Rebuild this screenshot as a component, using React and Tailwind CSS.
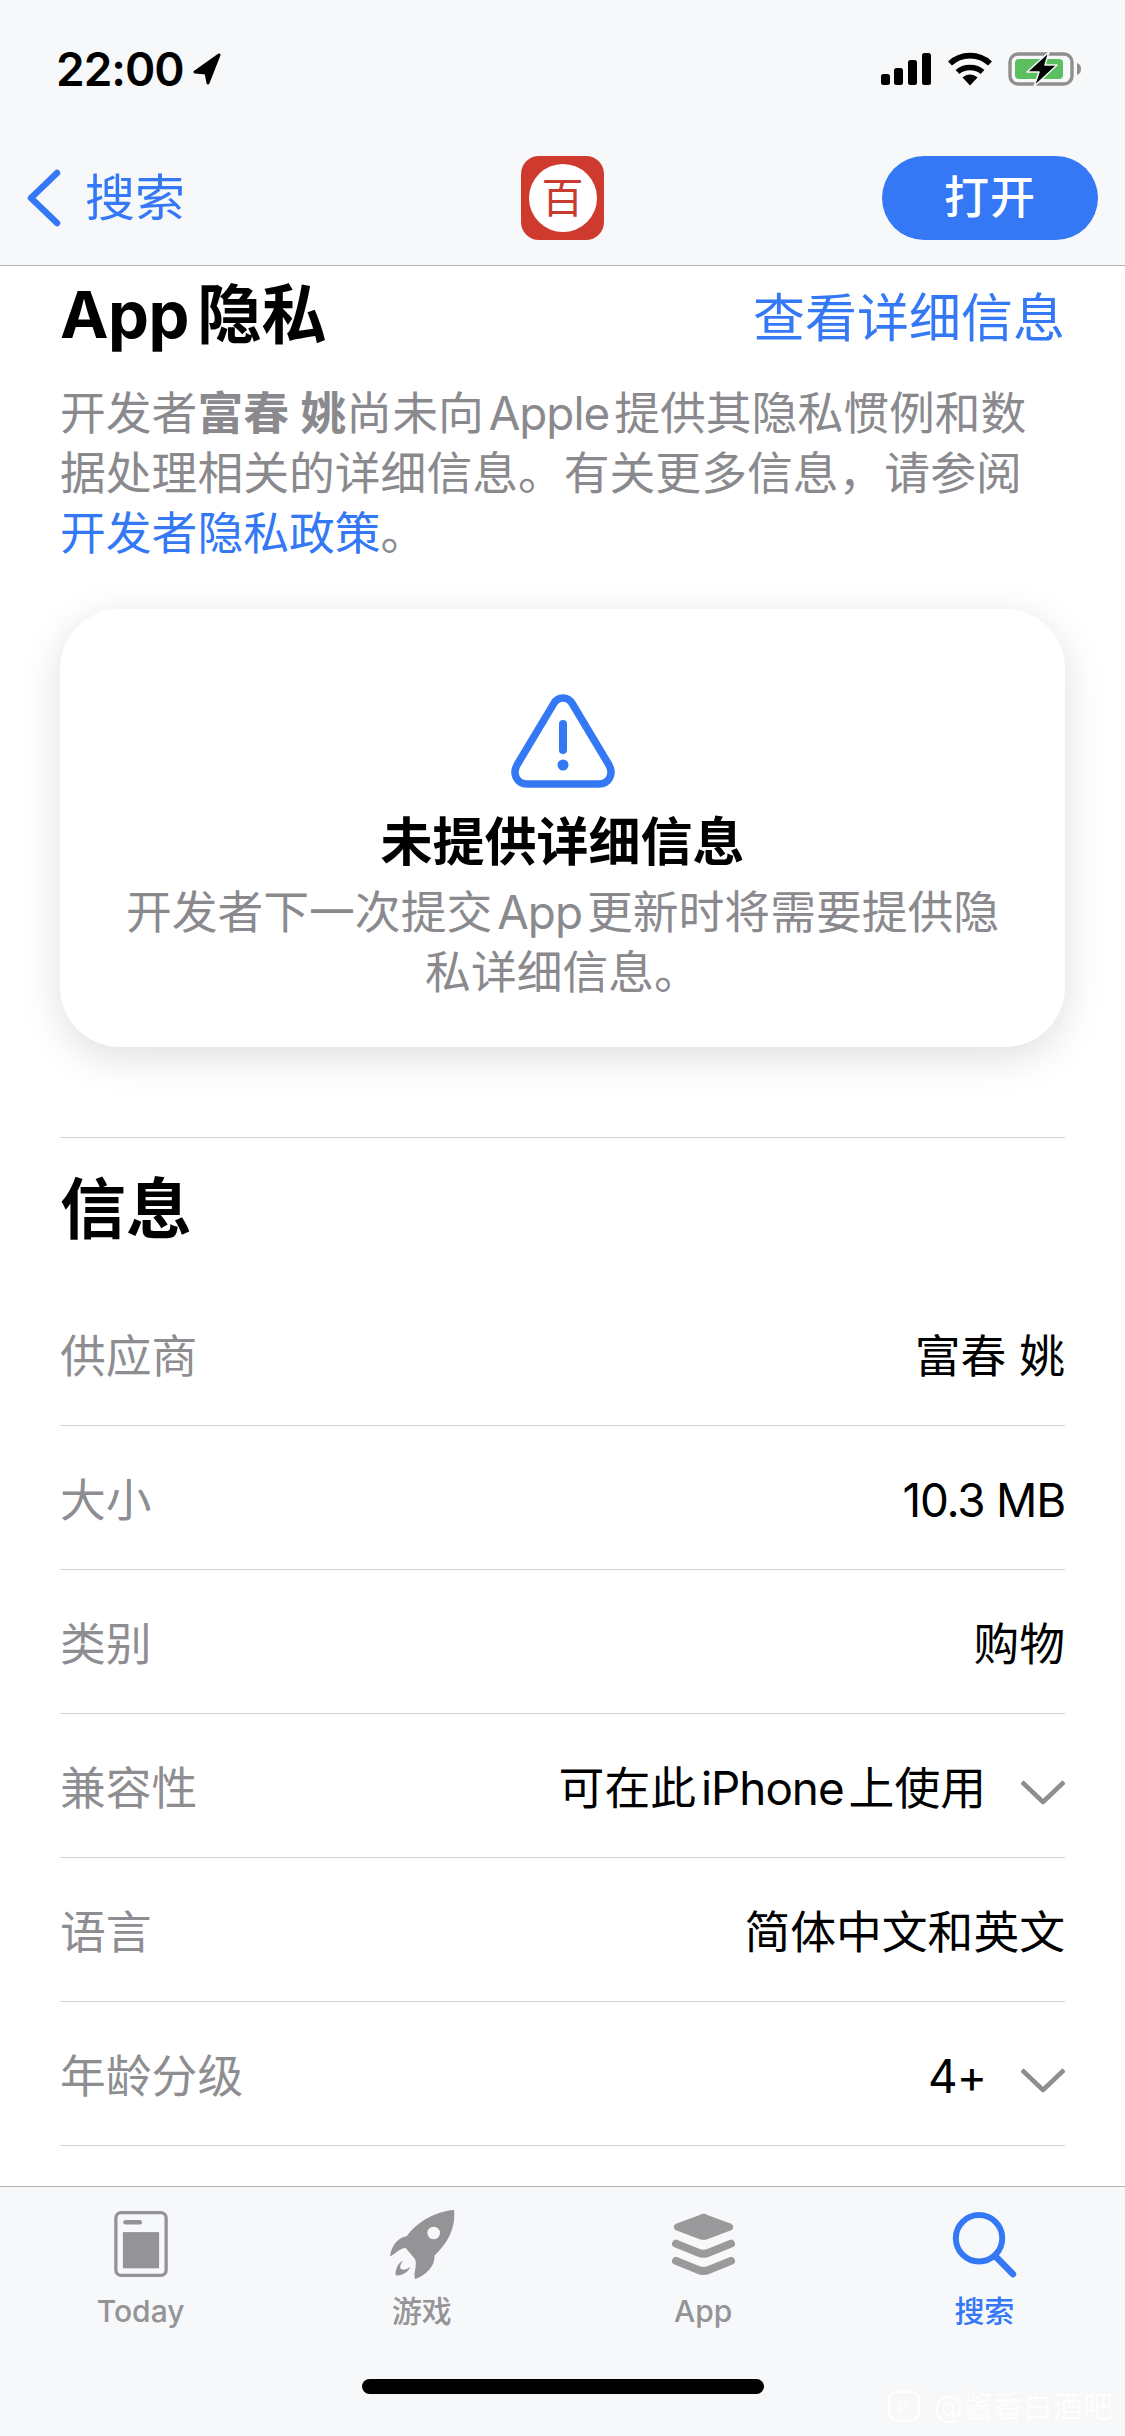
import React from "react";

const Latin = ({ children }) => <span className="mx-[5px] tracking-[-1px]">{children}</span>;

const Row = ({ label, value, chevron }) => (
  <div className="h-[144px] border-b border-[#d4d4d6] flex items-center justify-between pt-[6px]">
    <span className="text-[45.8px] leading-[60px] text-[#8e8e92]">{label}</span>
    <span className="flex items-center text-[45.8px] leading-[60px] text-black">
      <span>{value}</span>
      {chevron && (
        <svg viewBox="0 0 44 26" className="w-[44px] h-[26px] ml-[35px] mt-[7px]" fill="none" stroke="#8e8e92" strokeWidth="4.5" strokeLinejoin="round">
          <path d="M1 3 L22 23 L43 3" />
        </svg>
      )}
    </span>
  </div>
);

const Tab = ({ label, active, children }) => (
  <div className="flex flex-col items-center">
    <div className="h-[70px] flex items-center justify-center">{children}</div>
    <span className={`mt-[14px] text-[30px] leading-[36px] font-medium ${active ? "text-[#3478f6]" : "text-[#949497]"}`}>{label}</span>
  </div>
);

export default function App() {
  return (
    <div className="relative w-[1125px] h-[2436px] bg-white overflow-hidden flex flex-col font-['Inter','Noto_Sans_CJK_SC',sans-serif]">
      <header className="h-[266px] bg-[#f7f8f9] border-b border-[#b4b4b6] px-[27px] pt-[52px] shrink-0">
        <div className="h-[34px] flex items-center justify-between pl-[29px]">
          <div className="flex items-center">
            <span className="text-[46px] leading-[34px] font-semibold text-black tracking-[-1px]">22:00</span>
            <svg viewBox="0 0 28 32" className="w-[28px] h-[32px] ml-[9px]">
              <path d="M26 2 L2 19 L13 20 L15 30 Z" fill="#000" stroke="#000" strokeWidth="3" strokeLinejoin="round" />
            </svg>
          </div>
          <div className="flex items-center">
            <svg viewBox="0 0 50 32" className="w-[50px] h-[32px]" fill="#000">
              <rect x="0" y="21" width="9" height="11" rx="2.5" />
              <rect x="13" y="15" width="9" height="17" rx="2.5" />
              <rect x="27" y="7" width="9" height="25" rx="2.5" />
              <rect x="41" y="0" width="9" height="32" rx="2.5" />
            </svg>
            <svg viewBox="0 0 46 34" className="w-[46px] h-[34px] ml-[16px]" fill="none" stroke="#000" strokeWidth="5.6">
              <path d="M3 11.5 C14 1 32 1 43 11.5" />
              <path d="M10.5 20 C17 14 29 14 35.5 20" />
              <path d="M15.5 25.5 L23 33.5 L30.5 25.5 C26 21.5 20 21.5 15.5 25.5 Z" fill="#000" stroke="none" />
            </svg>
            <svg viewBox="0 0 74 36" className="w-[74px] h-[36px] ml-[15px] mr-[16px]">
              <rect x="2" y="3" width="62" height="30" rx="8" fill="none" stroke="#8f8f8f" strokeWidth="3.4" />
              <rect x="7" y="8" width="48" height="20" rx="4" fill="#5cbf5f" />
              <path d="M69 12 C72 13 73 15 73 18 C73 21 72 23 69 24 Z" fill="#8f8f8f" />
              <path d="M41 1 L19 21 L31 21 L26 35.5 L49 14 L37 14 Z" fill="#000" stroke="#f7f8f9" strokeWidth="1.5" strokeLinejoin="round" />
            </svg>
          </div>
        </div>
        <nav className="mt-[70px] h-[84px] flex items-center">
          <div className="flex-1 flex items-center text-[#3478f6]">
            <svg viewBox="0 0 34 58" className="w-[34px] h-[58px]" fill="none" stroke="#3478f6" strokeWidth="6.5" strokeLinecap="round" strokeLinejoin="round">
              <path d="M30 4 L4 29 L30 54" />
            </svg>
            <span className="ml-[24px] text-[50px] leading-[60px]">搜索</span>
          </div>
          <div className="w-[83px] h-[84px] rounded-[18px] bg-[#cf3a2e] flex items-center justify-center">
            <div className="w-[68px] h-[68px] rounded-full bg-white flex items-center justify-center text-[42px] leading-[42px] font-normal text-[#c93a30]">百</div>
          </div>
          <div className="flex-1 flex justify-end">
            <button className="w-[216px] h-[84px] rounded-full bg-[#3478f6] text-white text-[45px] leading-[60px] font-medium tracking-[1px]">打开</button>
          </div>
        </nav>
      </header>

      <main className="flex-1 px-[60px]">
        <div className="mt-[16px] h-[66px] flex items-center justify-between">
          <h2 className="text-[65px] leading-[66px] font-bold text-black tracking-[-0.5px]">App<span className="ml-[8px]">隐私</span></h2>
          <span className="mt-[8px] text-[52px] leading-[60px] text-[#3478f6]">查看详细信息</span>
        </div>
        <p className="mt-[36px] text-[45.8px] leading-[60px] text-[#8a8a8e]">
          开发者<span className="font-semibold">富春 姚</span>尚未向<Latin>Apple</Latin>提供其隐私惯例和数<br />
          据处理相关的详细信息。有关更多信息，请参阅<br />
          <span className="text-[#3478f6]">开发者隐私政策</span>。
        </p>

        <section className="mt-[45px] h-[438px] rounded-[60px] bg-white shadow-[0_10px_40px_rgba(0,0,0,0.13)] flex flex-col items-center pt-[85px]">
          <svg viewBox="0 0 104 94" className="w-[104px] h-[94px]" fill="none">
            <path d="M52 4 C47 4 44.5 6.5 42.5 10 L6 71 C1 80 6 90 16 90 L88 90 C98 90 103 80 98 71 L61.5 10 C59.5 6.5 57 4 52 4 Z" stroke="#3478f6" strokeWidth="7.5" strokeLinejoin="round" />
            <path d="M52 30 L52 56" stroke="#3478f6" strokeWidth="8" strokeLinecap="round" />
            <circle cx="52" cy="71" r="5.5" fill="#3478f6" />
          </svg>
          <h3 className="mt-[25px] text-[52px] leading-[60px] font-semibold text-black">未提供详细信息</h3>
          <p className="mt-[10px] text-[45.8px] leading-[60px] text-center text-[#8a8a8e]">
            开发者下一次提交<Latin>App</Latin>更新时将需要提供隐<br />私详细信息。
          </p>
        </section>

        <div className="mt-[90px] border-t border-[#d4d4d6]" />
        <h2 className="mt-[38px] h-[66px] text-[66px] leading-[66px] font-bold text-black">信息</h2>
        <div className="mt-[40px]">
          <Row label="供应商" value="富春 姚" />
          <Row label="大小" value={<span className="tracking-[-1.2px]">10.3 MB</span>} />
          <Row label="类别" value="购物" />
          <Row label="兼容性" value={<>可在此<Latin>iPhone</Latin>上使用</>} chevron />
          <Row label="语言" value="简体中文和英文" />
          <Row label="年龄分级" value={<span className="tracking-[-1px]">4+</span>} chevron />
        </div>
      </main>

      <footer className="h-[250px] shrink-0 bg-[#f7f8f9] border-t border-[#b4b4b6] pt-[22px] relative">
        <div className="grid grid-cols-4">
          <Tab label="Today">
            <svg viewBox="160 63 160 197" className="w-[54px] h-[66px]">
              <rect x="165" y="68" width="150" height="187" rx="16" fill="none" stroke="#949497" strokeWidth="10" />
              <rect x="187" y="90" width="56" height="13" rx="6.5" fill="#949497" />
              <rect x="186" y="126" width="108" height="108" fill="#949497" />
            </svg>
          </Tab>
          <Tab label="游戏">
            <svg viewBox="992 55 198 213" className="w-[66px] h-[71px]" fill="#949497">
              <path d="M1187 58 C1192 105 1175 150 1128 195 C1132 225 1100 255 1070 265 C1064 245 1078 225 1070 205 L1042 172 C1022 172 1008 195 995 196 C999 165 1020 140 1045 137 C1075 95 1130 62 1187 58 Z M1126 108 A19 19 0 1 0 1126 146 A19 19 0 1 0 1126 108 Z" fillRule="evenodd" />
              <path d="M1035 210 C1020 215 1010 235 1012 254 C1030 256 1050 245 1056 228 C1045 238 1030 240 1026 232 C1024 225 1030 215 1035 210 Z" />
            </svg>
          </Tab>
          <Tab label="App">
            <svg viewBox="155 65 190 195" className="w-[63px] h-[65px]">
              <path d="M250 74 Q254 74 262 78 L332 104 Q340 110 332 116 L262 142 Q250 147 238 142 L168 116 Q160 110 168 104 L238 78 Q246 74 250 74 Z" fill="#9a9a9c" stroke="#9a9a9c" strokeWidth="8" strokeLinejoin="round" />
              <path d="M167 160 L234 187 Q250 194 266 187 L333 160" fill="none" stroke="#9a9a9c" strokeWidth="24" strokeLinecap="round" />
              <path d="M167 212 L234 239 Q250 246 266 239 L333 212" fill="none" stroke="#9a9a9c" strokeWidth="24" strokeLinecap="round" />
            </svg>
          </Tab>
          <Tab label="搜索" active>
            <svg viewBox="995 60 195 202" className="w-[65px] h-[67px]" fill="none" stroke="#3478f6" strokeLinecap="round">
              <circle cx="1076" cy="142" r="70" strokeWidth="18" />
              <path d="M1125 196 L1178 250" strokeWidth="20" />
            </svg>
          </Tab>
        </div>
        <div className="mt-[50px] mx-auto w-[402px] h-[15px] rounded-full bg-black" />
        <div className="absolute left-[888px] top-[203px] flex items-center opacity-90">
          <div className="w-[32px] h-[32px] rounded-[9px] border-[3px] border-white flex items-center justify-center text-[14px] leading-[14px] text-white">鸥</div>
          <span className="ml-[14px] text-[30px] leading-[32px] text-white">@酱香白酒吧</span>
        </div>
      </footer>
    </div>
  );
}
